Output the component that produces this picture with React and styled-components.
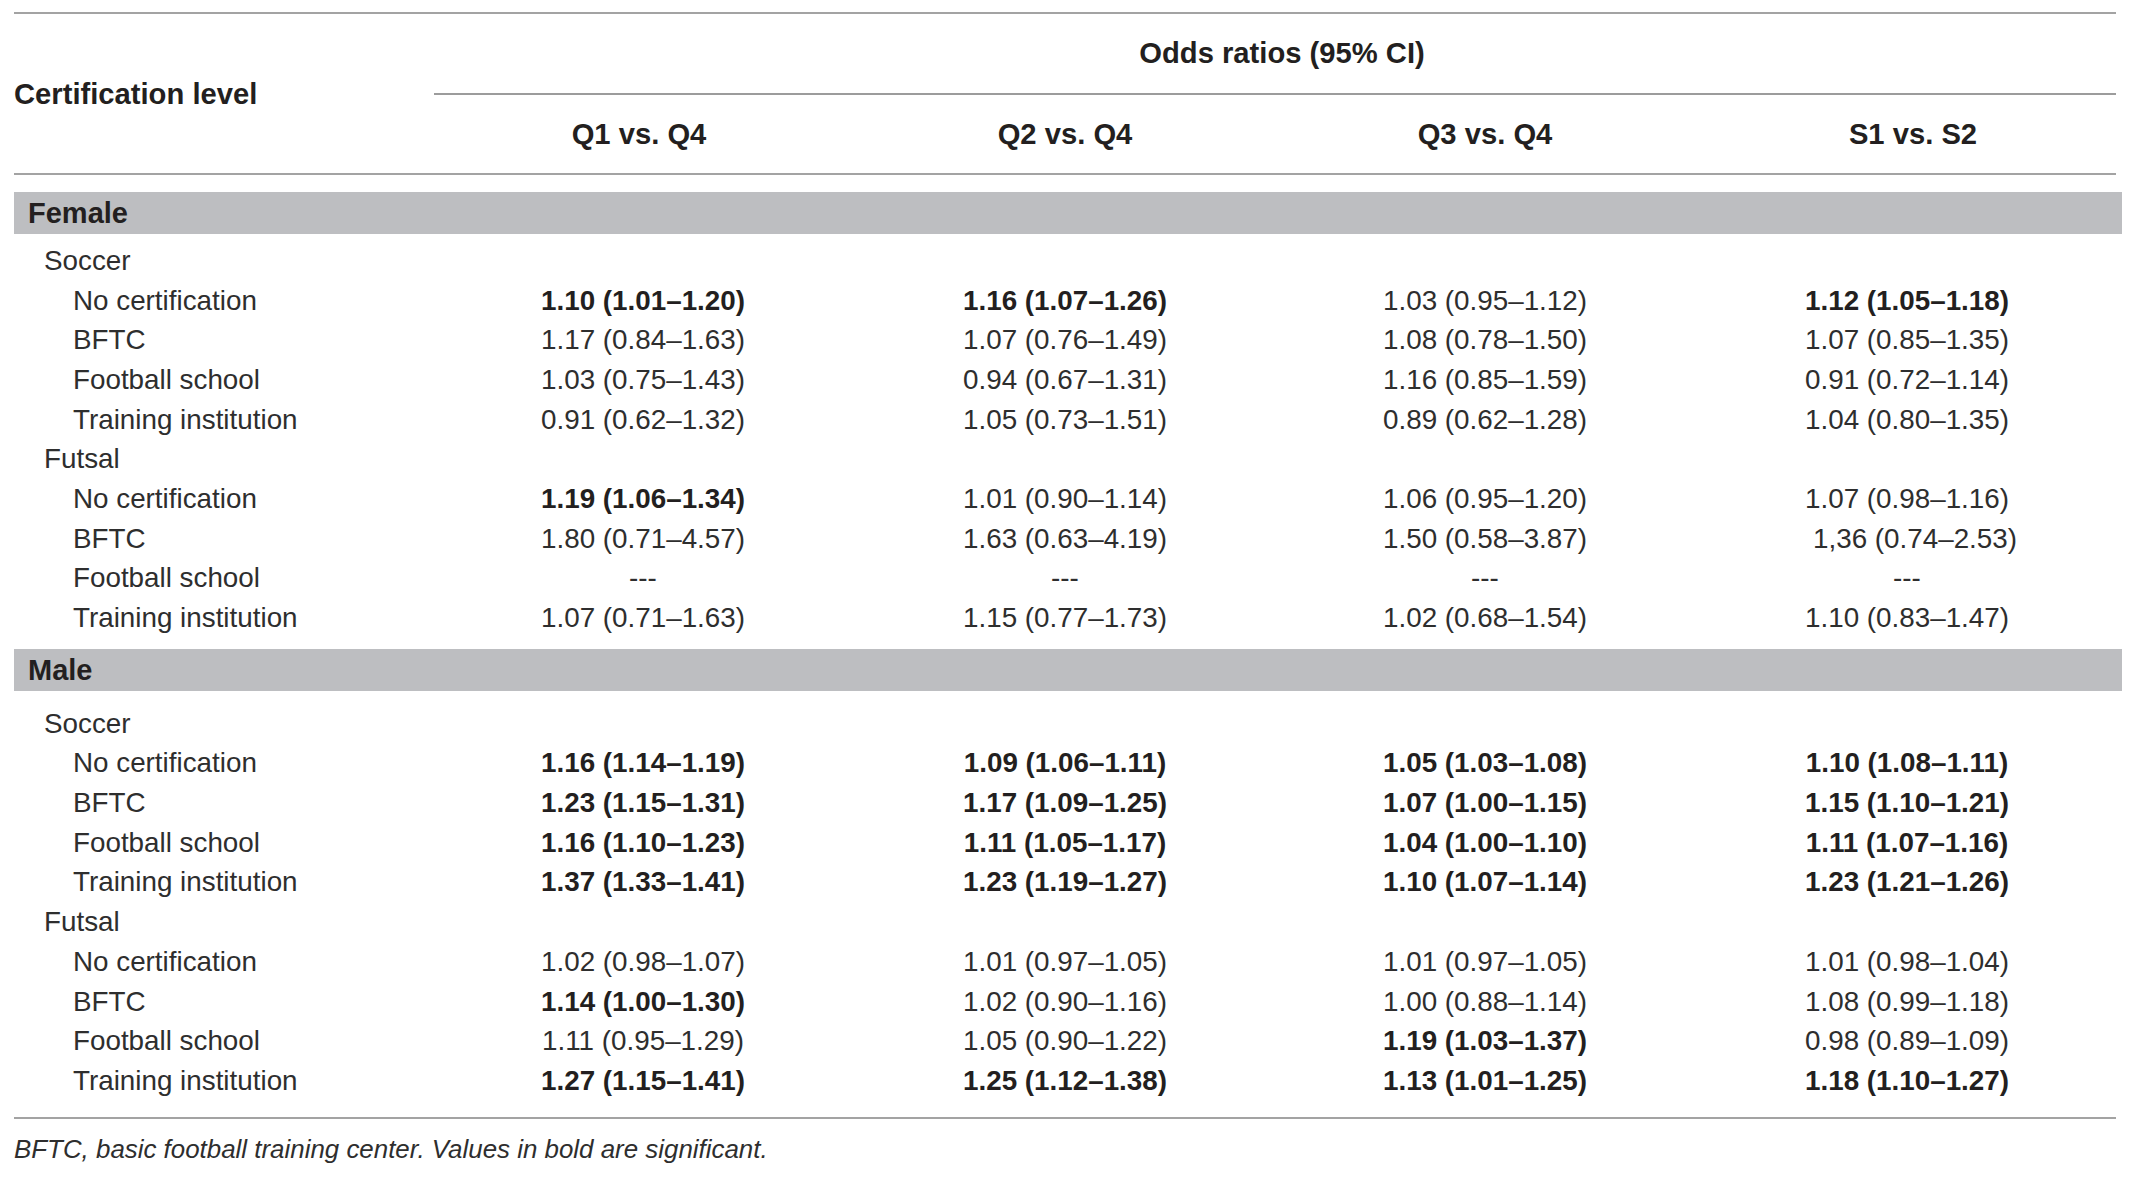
import React from 'react';
import styled, { createGlobalStyle } from 'styled-components';

const GlobalStyle = createGlobalStyle`
  html, body {
    margin: 0;
    padding: 0;
    background: #ffffff;
  }
  body {
    font-family: "Liberation Sans", Arial, Helvetica, sans-serif;
    color: #231f20;
  }
`;

const COLS = '420px 418px 426px 414px 1fr';

const Page = styled.div`
  padding: 12px 7px 0 14px;
  width: 2108px;
`;

const HeaderGrid = styled.div`
  display: grid;
  grid-template-columns: ${COLS};
  grid-template-rows: 81px 78px;
  margin-right: 6px;
  border-top: 2px solid #a3a3a3;
  border-bottom: 2px solid #a3a3a3;
  font-weight: 700;
  font-size: 29.2px;
`;

const StubHead = styled.div`
  grid-row: 1 / 3;
  display: flex;
  align-items: center;
  padding-top: 2px;
`;

const SpanHead = styled.div`
  grid-column: 2 / 6;
  display: flex;
  align-items: center;
  justify-content: center;
  padding-left: 14px;
  border-bottom: 2px solid #9c9c9c;
`;

const ColHead = styled.div`
  display: flex;
  align-items: center;
  justify-content: center;
  padding-left: ${(p) => (p.nudge > 0 ? p.nudge : 0)}px;
  padding-right: ${(p) => (p.nudge < 0 ? -p.nudge : 0)}px;
`;

const Section = styled.section`
  padding: ${(p) => p.padTop}px 0 ${(p) => p.padBottom}px;
`;

const Band = styled.div`
  height: 42px;
  line-height: 43px;
  background: #bdbec1;
  padding-left: 14px;
  font-weight: 700;
  font-size: 29px;
  margin-top: ${(p) => p.gap}px;
`;

const Row = styled.div`
  display: grid;
  grid-template-columns: ${COLS};
  height: 39.7px;
  align-items: center;
  font-size: 27.8px;
  color: #2e2e2e;
`;

const Label = styled.div`
  padding-left: ${(p) => (p.group ? 30 : 59)}px;
  white-space: nowrap;
`;

const Value = styled.div`
  text-align: center;
  white-space: nowrap;
  font-weight: ${(p) => (p.bold ? 700 : 400)};
  color: ${(p) => (p.bold ? '#231f20' : '#2e2e2e')};
  padding-left: ${(p) => p.nudge || 0}px;
`;

const FootRule = styled.div`
  margin-right: 6px;
  border-top: 2px solid #a3a3a3;
`;

const Footnote = styled.p`
  margin: 0;
  padding-top: 16px;
  font-style: italic;
  font-size: 25.9px;
  color: #2e2e2e;
`;

const sections = [
  {
    title: 'Female',
    gap: 17,
    padTop: 7,
    padBottom: 11,
    groups: [
      {
        name: 'Soccer',
        rows: [
          ['No certification', ['*1.10 (1.01–1.20)', '*1.16 (1.07–1.26)', '1.03 (0.95–1.12)', '*1.12 (1.05–1.18)']],
          ['BFTC', ['1.17 (0.84–1.63)', '1.07 (0.76–1.49)', '1.08 (0.78–1.50)', '1.07 (0.85–1.35)']],
          ['Football school', ['1.03 (0.75–1.43)', '0.94 (0.67–1.31)', '1.16 (0.85–1.59)', '0.91 (0.72–1.14)']],
          ['Training institution', ['0.91 (0.62–1.32)', '1.05 (0.73–1.51)', '0.89 (0.62–1.28)', '1.04 (0.80–1.35)']],
        ],
      },
      {
        name: 'Futsal',
        rows: [
          ['No certification', ['*1.19 (1.06–1.34)', '1.01 (0.90–1.14)', '1.06 (0.95–1.20)', '1.07 (0.98–1.16)']],
          ['BFTC', ['1.80 (0.71–4.57)', '1.63 (0.63–4.19)', '1.50 (0.58–3.87)', '>1,36 (0.74–2.53)']],
          ['Football school', ['---', '---', '---', '---']],
          ['Training institution', ['1.07 (0.71–1.63)', '1.15 (0.77–1.73)', '1.02 (0.68–1.54)', '1.10 (0.83–1.47)']],
        ],
      },
    ],
  },
  {
    title: 'Male',
    gap: 0,
    padTop: 13,
    padBottom: 16,
    groups: [
      {
        name: 'Soccer',
        rows: [
          ['No certification', ['*1.16 (1.14–1.19)', '*1.09 (1.06–1.11)', '*1.05 (1.03–1.08)', '*1.10 (1.08–1.11)']],
          ['BFTC', ['*1.23 (1.15–1.31)', '*1.17 (1.09–1.25)', '*1.07 (1.00–1.15)', '*1.15 (1.10–1.21)']],
          ['Football school', ['*1.16 (1.10–1.23)', '*1.11 (1.05–1.17)', '*1.04 (1.00–1.10)', '*1.11 (1.07–1.16)']],
          ['Training institution', ['*1.37 (1.33–1.41)', '*1.23 (1.19–1.27)', '*1.10 (1.07–1.14)', '*1.23 (1.21–1.26)']],
        ],
      },
      {
        name: 'Futsal',
        rows: [
          ['No certification', ['1.02 (0.98–1.07)', '1.01 (0.97–1.05)', '1.01 (0.97–1.05)', '1.01 (0.98–1.04)']],
          ['BFTC', ['*1.14 (1.00–1.30)', '1.02 (0.90–1.16)', '1.00 (0.88–1.14)', '1.08 (0.99–1.18)']],
          ['Football school', ['1.11 (0.95–1.29)', '1.05 (0.90–1.22)', '*1.19 (1.03–1.37)', '0.98 (0.89–1.09)']],
          ['Training institution', ['*1.27 (1.15–1.41)', '*1.25 (1.12–1.38)', '*1.13 (1.01–1.25)', '*1.18 (1.10–1.27)']],
        ],
      },
    ],
  },
];

// "*" marks a significant (bold) value, ">" a cell set slightly right
const parseCell = (raw) => {
  let text = raw;
  let bold = false;
  let nudge = 0;
  if (text.startsWith('*')) {
    bold = true;
    text = text.slice(1);
  }
  if (text.startsWith('>')) {
    nudge = 16;
    text = text.slice(1);
  }
  return { text, bold, nudge };
};

const App = () => (
  <>
    <GlobalStyle />
    <Page>
      <HeaderGrid>
        <StubHead>Certification level</StubHead>
        <SpanHead>Odds ratios (95% CI)</SpanHead>
        <ColHead nudge={-8}>Q1 vs. Q4</ColHead>
        <ColHead>Q2 vs. Q4</ColHead>
        <ColHead>Q3 vs. Q4</ColHead>
        <ColHead nudge={18}>S1 vs. S2</ColHead>
      </HeaderGrid>

      {sections.map((section) => (
        <React.Fragment key={section.title}>
          <Band gap={section.gap}>{section.title}</Band>
          <Section padTop={section.padTop} padBottom={section.padBottom}>
            {section.groups.map((group) => (
              <React.Fragment key={group.name}>
                <Row>
                  <Label group>{group.name}</Label>
                </Row>
                {group.rows.map(([label, cells]) => (
                  <Row key={label}>
                    <Label>{label}</Label>
                    {cells.map((raw, i) => {
                      const cell = parseCell(raw);
                      return (
                        <Value key={i} bold={cell.bold} nudge={cell.nudge}>
                          {cell.text}
                        </Value>
                      );
                    })}
                  </Row>
                ))}
              </React.Fragment>
            ))}
          </Section>
        </React.Fragment>
      ))}

      <FootRule />
      <Footnote>BFTC, basic football training center. Values in bold are significant.</Footnote>
    </Page>
  </>
);

export default App;
